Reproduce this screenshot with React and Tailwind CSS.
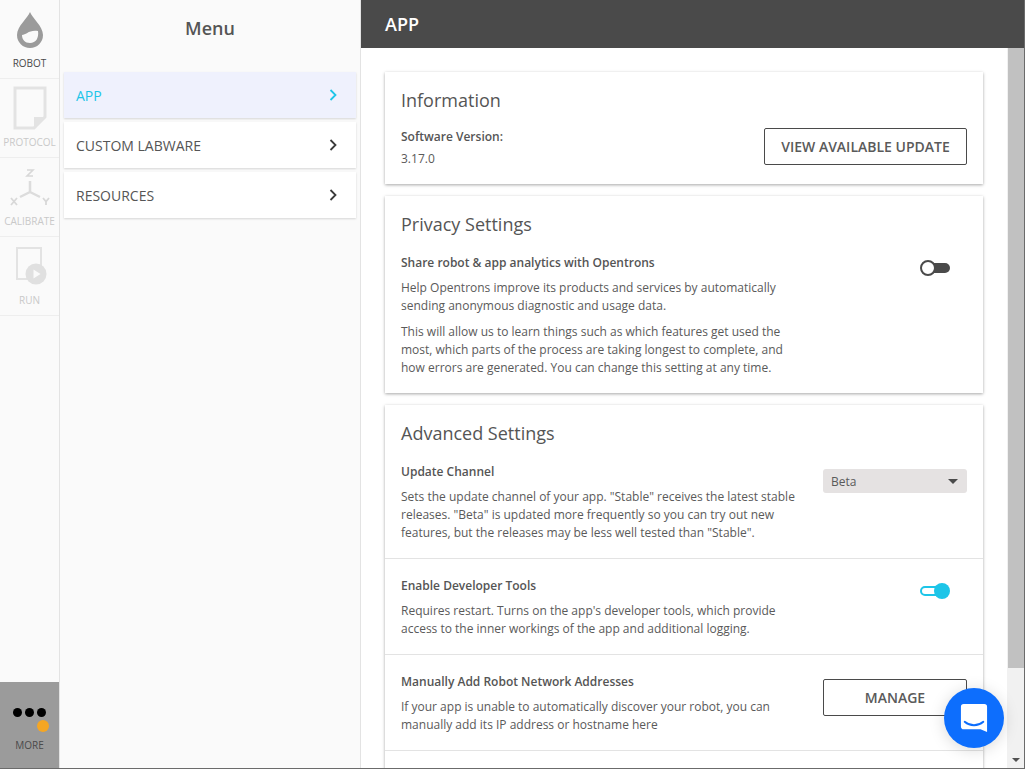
import React from "react";

const Chevron = ({ c = "#4a4a4a" }) => (
  <svg width="10" height="14" viewBox="0 0 10 14" fill="none"><path d="M2.5 2 L7.5 7 L2.5 12" stroke={c} strokeWidth="1.8" /></svg>
);

const NavItem = ({ label, active, children }) => (
  <div className="h-[79px] border-b border-[#eeeeee] flex flex-col items-center shrink-0">
    <div className="h-[52px] mt-[3px] flex items-center justify-center">{children}</div>
    <div className={`text-[10px] leading-[14px] mt-[1px] ${active ? "text-[#4a4a4a]" : "text-[#c9c9c9]"}`}>{label}</div>
  </div>
);

const MenuItem = ({ label, active }) => (
  <div className={`h-[46px] flex items-center justify-between pl-3 pr-[18px] pt-[2px] shadow-[0_1px_2px_rgba(0,0,0,0.15)] text-sm ${active ? "bg-[#eff1fd] text-[#1dc5e8]" : "bg-white text-[#555555]"}`}>
    <span>{label}</span>
    <span className="-mt-[2px]"><Chevron c={active ? "#1dc5e8" : "#3a3a3a"} /></span>
  </div>
);

const Card = ({ children, className = "" }) => (
  <section className={`bg-white shadow-[0_1px_3px_rgba(0,0,0,0.35)] ${className}`}>
    {children}
  </section>
);

const Heading = ({ children }) => (
  <h3 className="text-lg leading-[25px] text-[#555555] font-normal">{children}</h3>
);

const Label = ({ children }) => (
  <div className="text-xs leading-[16px] font-semibold text-[#555555]">{children}</div>
);

const Body = ({ children, className = "" }) => (
  <p className={`text-xs leading-[18px] text-[#5a5a5a] ${className}`}>{children}</p>
);

const Toggle = ({ on }) => (
  <div className="relative w-[30px] h-[16px]">
    {on ? (
      <>
        <div className="absolute left-0 top-[3px] w-[26px] h-[10px] rounded-full border-2 border-[#1dc5e8] bg-white" />
        <div className="absolute right-0 top-0 w-4 h-4 rounded-full bg-[#1dc5e8]" />
      </>
    ) : (
      <>
        <div className="absolute right-0 top-[3px] w-[26px] h-[10px] rounded-full bg-[#4a4a4a]" />
        <div className="absolute left-0 top-0 w-4 h-4 rounded-full bg-white border-2 border-[#4a4a4a]" />
      </>
    )}
  </div>
);

const OutlineBtn = ({ children, className = "" }) => (
  <div className={`h-[37px] flex items-center justify-center border border-[#4a4a4a] rounded-[2px] text-sm font-semibold text-[#5a5a5a] bg-white ${className}`}>
    {children}
  </div>
);

export default function App() {
  return (
    <div className="relative w-[1025px] h-[769px] overflow-hidden flex bg-white border-r border-b border-[#6b6b6b]" style={{ fontFamily: '"Open Sans", sans-serif' }}>
      {/* left nav */}
      <nav className="w-[60px] shrink-0 h-full flex flex-col bg-[#fafafa] border-r border-[#e3e3e3]">
        <NavItem label="ROBOT" active>
          <svg width="26" height="36" viewBox="0 0 26 36" className="mt-[1px]">
            <path d="M13 0 C15 6 26 14 26 23 A13 13 0 0 1 0 23 C0 14 11 6 13 0 Z" fill="#9b9b9b" />
            <path d="M5 23 C9 23 12 17.5 21 19 C22 26 19 31 13 31 C8 31 5 27.5 5 23 Z" fill="#fafafa" />
          </svg>
        </NavItem>
        <NavItem label="PROTOCOL">
          <svg width="34" height="44" viewBox="0 0 34 44" fill="none">
            <path d="M2 2 H32 V31 L21 42 H2 Z" stroke="#e3e3e3" strokeWidth="3" fill="#fafafa" />
            <path d="M32 31 H21 V42 Z" fill="#e3e3e3" />
          </svg>
        </NavItem>
        <NavItem label="CALIBRATE">
          <svg width="40" height="38" viewBox="0 0 40 38" fill="none" className="mt-[2px]">
            <path d="M20 12 V23 M20 23 L10 28 M20 23 L30 28" stroke="#dcdcdc" strokeWidth="2.5" />
            <path d="M17 1 H23 L17 7 H23" stroke="#d8d8d8" strokeWidth="1.6" />
            <path d="M1 29 L7 36 M7 29 L1 36" stroke="#d8d8d8" strokeWidth="1.8" />
            <path d="M33 29 L36 32.5 L39 29 M36 32.5 V36" stroke="#d8d8d8" strokeWidth="1.8" />
          </svg>
        </NavItem>
        <NavItem label="RUN">
          <svg width="32" height="38" viewBox="0 0 32 38" fill="none" className="ml-[5px]">
            <path d="M1 1 H25 V32 H1 Z" stroke="#e3e3e3" strokeWidth="2" />
            <circle cx="20" cy="27" r="10.5" fill="#e0e0e0" />
            <path d="M17.5 22.5 L24.5 27 L17.5 31.5 Z" fill="#fafafa" />
          </svg>
        </NavItem>
        <div className="mt-auto h-[86px] bg-[#9b9b9b] flex flex-col items-center pt-[26px]">
          <div className="relative flex gap-[3px]">
            <span className="w-[9px] h-[9px] rounded-full bg-black" />
            <span className="w-[9px] h-[9px] rounded-full bg-black" />
            <span className="w-[9px] h-[9px] rounded-full bg-black" />
            <span className="absolute left-[24px] top-[12px] w-3 h-3 rounded-full bg-[#f5a623]" />
          </div>
          <div className="text-[10px] leading-[14px] mt-[21px] text-[#4a4a4a]">MORE</div>
        </div>
      </nav>

      {/* menu panel */}
      <aside className="w-[301px] shrink-0 h-full bg-[#fafafa] border-r border-[#e3e3e3] pl-1 pr-1">
        <h2 className="h-[72px] pb-[17px] flex items-center justify-center text-lg font-semibold text-[#555555]">Menu</h2>
        <div className="flex flex-col gap-1">
          <MenuItem label="APP" active />
          <MenuItem label="CUSTOM LABWARE" />
          <MenuItem label="RESOURCES" />
        </div>
      </aside>

      {/* main */}
      <main className="flex-1 min-w-0 h-full flex flex-col">
        <header className="h-12 shrink-0 bg-[#4a4a4a] flex items-center pl-6 pb-[1px] text-lg font-semibold text-white">APP</header>
        <div className="flex-1 min-h-0 flex">
          <div className="flex-1 min-w-0 overflow-hidden pl-6 pr-6 pt-6 flex flex-col gap-3">
            <Card className="h-[112px] shrink-0 px-4 pt-4 flex justify-between">
              <div>
                <Heading>Information</Heading>
                <div className="mt-4"><Label>Software Version:</Label></div>
                <Body className="mt-[5px]">3.17.0</Body>
              </div>
              <OutlineBtn className="w-[203px] mt-10">VIEW AVAILABLE UPDATE</OutlineBtn>
            </Card>

            <Card className="h-[197px] shrink-0 px-4 pt-4">
              <Heading>Privacy Settings</Heading>
              <div className="flex justify-between mt-[18px]">
                <div className="w-[398px]">
                  <Label>Share robot &amp; app analytics with Opentrons</Label>
                  <Body className="mt-[8px]">Help Opentrons improve its products and services by automatically sending anonymous diagnostic and usage data.</Body>
                  <Body className="mt-2">This will allow us to learn things such as which features get used the most, which parts of the process are taking longest to complete, and how errors are generated. You can change this setting at any time.</Body>
                </div>
                <div className="mr-[17px] mt-[5px]"><Toggle /></div>
              </div>
            </Card>

            <Card className="shrink-0">
              <div className="px-4 pt-4 h-[154px] border-b border-[#e3e3e3]">
                <Heading>Advanced Settings</Heading>
                <div className="flex justify-between mt-[18px]">
                  <div className="w-[400px]">
                    <Label>Update Channel</Label>
                    <Body className="mt-[8px]">Sets the update channel of your app. "Stable" receives the latest stable releases. "Beta" is updated more frequently so you can try out new features, but the releases may be less well tested than "Stable".</Body>
                  </div>
                  <div className="w-[144px] h-6 rounded-[3px] bg-[#e5e2e2] flex items-center justify-between pl-2 pr-[9px] pt-[2px] text-xs text-[#5a5a5a] mt-[5px]">
                    <span>Beta</span>
                    <span className="w-0 h-0 -mt-[1px] border-l-[5px] border-r-[5px] border-t-[5px] border-l-transparent border-r-transparent border-t-[#4a4a4a]" />
                  </div>
                </div>
              </div>
              <div className="px-4 pt-[19px] h-[96px] border-b border-[#e3e3e3] flex justify-between">
                <div className="w-[398px]">
                  <Label>Enable Developer Tools</Label>
                  <Body className="mt-[8px]">Requires restart. Turns on the app's developer tools, which provide access to the inner workings of the app and additional logging.</Body>
                </div>
                <div className="mr-[17px] mt-[5px]"><Toggle on /></div>
              </div>
              <div className="px-4 pt-[19px] h-[96px] border-b border-[#e3e3e3] flex justify-between">
                <div className="w-[398px]">
                  <Label>Manually Add Robot Network Addresses</Label>
                  <Body className="mt-[8px]">If your app is unable to automatically discover your robot, you can manually add its IP address or hostname here</Body>
                </div>
                <OutlineBtn className="w-[144px] mt-[5px]">MANAGE</OutlineBtn>
              </div>
              <div className="h-10" />
            </Card>
          </div>

          {/* scrollbar */}
          <div className="w-[17px] shrink-0 h-full bg-[#f1f1f1] flex flex-col pl-[1px]">
            <div className="h-[620px] bg-[#c1c1c1]" />
            <div className="mt-auto h-[17px] flex items-center justify-center">
              <span className="w-0 h-0 border-l-[4px] border-r-[4px] border-t-[4px] border-l-transparent border-r-transparent border-t-[#505050]" />
            </div>
          </div>
        </div>
      </main>

      {/* chat bubble */}
      <div className="absolute left-[944px] top-[688px] w-[60px] h-[60px] rounded-full bg-[#0d6efd] shadow-[0_2px_16px_rgba(0,0,0,0.15)] flex items-center justify-center">
        <svg width="28" height="32" viewBox="0 0 30 32">
          <path d="M4 1 H26 A3 3 0 0 1 29 4 V31 L22 28 H4 A3 3 0 0 1 1 25 V4 A3 3 0 0 1 4 1 Z" fill="#ffffff" />
          <path d="M5 20 C11 25 19 25 25 20" stroke="#0d6efd" strokeWidth="2" fill="none" strokeLinecap="round" />
        </svg>
      </div>
    </div>
  );
}
